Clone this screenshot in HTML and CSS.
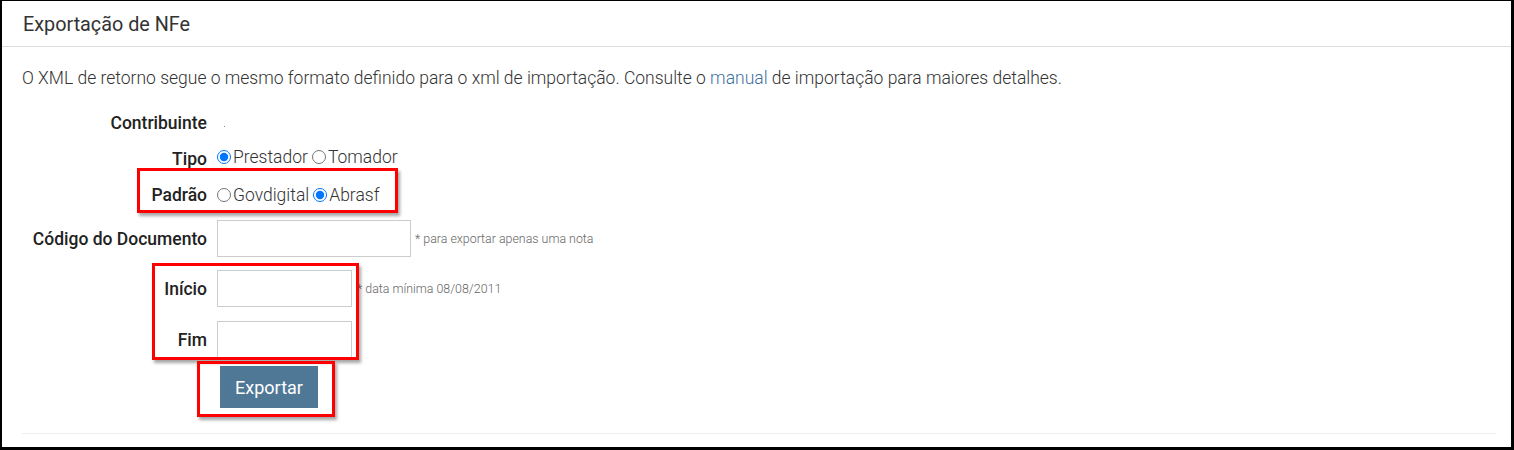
FILE: index.html
```html
<!DOCTYPE html>
<html lang="pt-BR">
<head>
    <meta charset="UTF-8">
    <title>Exportação de NFe</title>
    <link rel="stylesheet" href="styles.css">
</head>
<body>

<div class="panel">
    <div class="panel-heading">Exportação de NFe</div>

    <div class="panel-body">
        <p class="intro">O XML de retorno segue o mesmo formato definido para o xml de importação. Consulte o <a href="#">manual</a> de importação para maiores detalhes.</p>

        <form class="export-form">
            <div class="row row-contrib">
                <label>Contribuinte</label>
                <span class="dot"></span>
            </div>

            <div class="row row-tipo">
                <label>Tipo</label>
                <div class="options">
                    <input type="radio" name="tipo" id="prestador" checked><span>Prestador</span>
                    <input type="radio" name="tipo" id="tomador"><span>Tomador</span>
                </div>
            </div>

            <div class="row row-padrao">
                <label>Padrão</label>
                <div class="options">
                    <input type="radio" name="padrao" id="govdigital"><span>Govdigital</span>
                    <input type="radio" name="padrao" id="abrasf" checked><span>Abrasf</span>
                </div>
            </div>

            <div class="row row-codigo">
                <label>Código do Documento</label>
                <input type="text" class="field field-wide">
                <small>* para exportar apenas uma nota</small>
            </div>

            <div class="row row-inicio">
                <label>Início</label>
                <input type="text" class="field">
                <small>* data mínima 08/08/2011</small>
            </div>

            <div class="row row-fim">
                <label>Fim</label>
                <input type="text" class="field">
            </div>

            <div class="row row-botao">
                <button type="button">Exportar</button>
            </div>
        </form>

        <hr>
    </div>

    <!-- marcações em vermelho -->
    <div class="mark mark-padrao"></div>
    <div class="mark mark-datas"></div>
    <div class="mark mark-botao"></div>
</div>

</body>
</html>
```

FILE: styles.css
```css
* {
    box-sizing: border-box;
    margin: 0;
    padding: 0;
}

body {
    background-color: #000;
    padding: 1px 3px 3px 2px;
    font-family: Roboto, 'Liberation Sans', sans-serif;
    color: #333;
}

.panel {
    position: relative;
    background-color: #fff;
    height: 446px;
}

.panel-heading {
    height: 46px;
    padding: 12px 0 0 21px;
    font-size: 19.8px;
    line-height: 24px;
    border-bottom: 1px solid #ddd;
}

.panel-body {
    padding: 19px 15px 0 20px;
}

.intro {
    font-size: 17.5px;
    font-weight: 300;
    line-height: 24px;
    color: #333;
}

.intro a {
    color: #3d6f9e;
    text-decoration: none;
}

.row {
    display: flex;
    align-items: center;
}

.row label {
    width: 195px;
    padding-right: 10px;
    text-align: right;
    font-size: 17.5px;
    font-weight: 500;
    color: #222;
    flex-shrink: 0;
}

.row-contrib {
    margin-top: 21px;
    height: 24px;
}

.dot {
    display: block;
    width: 1px;
    height: 1px;
    margin: 6px 0 0 7px;
    background-color: #6f8fb3;
}

.row-tipo {
    margin-top: 10px;
    height: 24px;
}

.row-tipo label {
    padding-top: 4px;
}

.row-padrao {
    margin-top: 14px;
    height: 24px;
}

.options {
    display: flex;
    align-items: center;
    font-size: 17.5px;
    font-weight: 300;
}

.options input {
    width: 14px;
    height: 14px;
    margin: 0 2px 0 0;
}

.options span {
    margin-right: 4px;
}

.row-codigo {
    margin-top: 13px;
}

.field {
    width: 135px;
    height: 37px;
    border: 1px solid #ccc;
    background-color: #fff;
}

.field-wide {
    width: 194px;
}

.row small {
    margin-left: 5px;
    font-size: 12.4px;
    font-weight: 300;
    color: #666;
}

.row-codigo small {
    margin-left: 4px;
}

.row-inicio {
    margin-top: 13px;
}

.row-fim {
    margin-top: 14px;
}

.row-botao {
    margin-top: 8px;
    padding-left: 198px;
}

button {
    width: 98px;
    height: 42px;
    background-color: #4f7897;
    color: #fff;
    border: none;
    font-family: Roboto, 'Liberation Sans', sans-serif;
    font-size: 18px;
}

hr {
    margin-top: 25px;
    border: none;
    border-top: 1px solid #eee;
}

.mark {
    position: absolute;
    border: 3px solid #f00;
    box-shadow: 2px 3px 3px rgba(0, 0, 0, 0.35);
}

.mark-padrao {
    left: 135px;
    top: 167px;
    width: 261px;
    height: 45px;
}

.mark-datas {
    left: 150px;
    top: 262px;
    width: 207px;
    height: 97px;
}

.mark-botao {
    left: 195px;
    top: 360px;
    width: 138px;
    height: 56px;
}
```
